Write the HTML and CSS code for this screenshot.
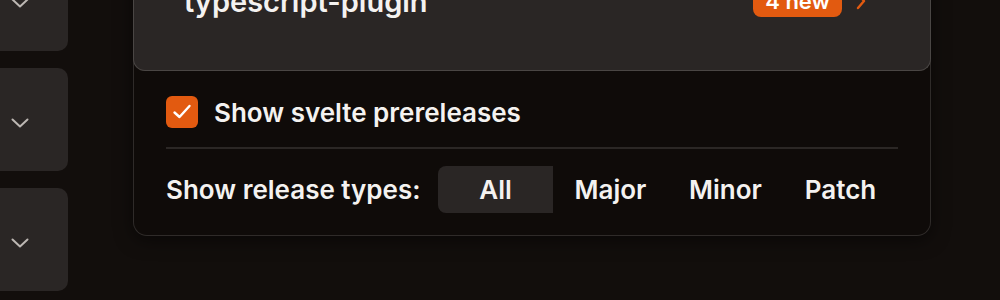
FILE: index.html
```html
<!DOCTYPE html>
<html>
<head>
<meta charset="utf-8">
<link rel="stylesheet" href="styles.css">
</head>
<body>
<div class="page">
  <div class="side">
    <div class="side-card"><svg class="chev" viewBox="0 0 18 10" width="18" height="10"><path d="M1.5 1.5l7.5 7 7.5-7" fill="none" stroke="#bcb7b3" stroke-width="2" stroke-linecap="round" stroke-linejoin="round"/></svg></div>
    <div class="side-card"><svg class="chev" viewBox="0 0 18 10" width="18" height="10"><path d="M1.5 1.5l7.5 7 7.5-7" fill="none" stroke="#bcb7b3" stroke-width="2" stroke-linecap="round" stroke-linejoin="round"/></svg></div>
    <div class="side-card"><svg class="chev" viewBox="0 0 18 10" width="18" height="10"><path d="M1.5 1.5l7.5 7 7.5-7" fill="none" stroke="#bcb7b3" stroke-width="2" stroke-linecap="round" stroke-linejoin="round"/></svg></div>
  </div>
  <div class="panel">
    <div class="pkg">
      <div class="pkg-row">
        <span class="pkg-name">typescript-plugin</span>
        <span class="badge">4 new</span>
        <svg class="arrow" viewBox="0 0 10 18" width="10" height="18"><path d="M2 2l6 7-6 7" fill="none" stroke="#e25a10" stroke-width="2.4" stroke-linecap="round" stroke-linejoin="round"/></svg>
      </div>
    </div>
    <div class="body">
      <label class="check-row">
        <span class="checkbox"><svg viewBox="0 0 22 22" width="22" height="22"><path d="M3.5 11.5l5 4.5 10-11" fill="none" stroke="#fff" stroke-width="2.4" stroke-linecap="round" stroke-linejoin="round"/></svg></span>
        <span class="check-label">Show svelte prereleases</span>
      </label>
      <div class="divider"></div>
      <div class="types-row">
        <span class="types-label">Show release types:</span>
        <div class="segments">
          <span class="seg active">All</span>
          <span class="seg">Major</span>
          <span class="seg">Minor</span>
          <span class="seg">Patch</span>
        </div>
      </div>
    </div>
  </div>
</div>
</body>
</html>
```

FILE: styles.css
```css
html, body {
  margin: 0;
  padding: 0;
  background: #120e0c;
  overflow: hidden;
  width: 1000px;
  height: 300px;
}
body {
  font-family: Inter, "Noto Sans", sans-serif;
  color: #f4f2f0;
}
.page {
  display: flex;
  align-items: flex-start;
}
.side {
  display: flex;
  flex-direction: column;
  gap: 17px;
  width: 68px;
  margin-top: -52px;
}
.side-card {
  height: 103px;
  background: #2a2625;
  border-radius: 0 10px 10px 0;
  display: flex;
  align-items: center;
  padding: 6px 0 0 11px;
  box-sizing: border-box;
}
.chev { display: block; }
.panel {
  margin-left: 65px;
  margin-top: -29px;
  width: 798px;
  box-sizing: border-box;
  background: #0f0b09;
  border: 1px solid #2f2b29;
  border-top: none;
  border-radius: 0 0 14px 14px;
  box-shadow: 0 4px 18px rgba(0,0,0,0.5);
}
.pkg {
  margin: 0 -1px;
  height: 100px;
  box-sizing: border-box;
  background: #2a2625;
  border: 1px solid #4a4644;
  border-top: none;
  border-radius: 0 0 12px 12px;
  padding: 15px 64px 0 50px;
}
.pkg-row {
  display: flex;
  align-items: center;
  height: 30px;
}
.pkg-name {
  font-size: 29px;
  font-weight: 600;
  flex: 1;
}
.badge {
  background: #e25a10;
  color: #fff;
  font-size: 22px;
  font-weight: 600;
  border-radius: 8px;
  height: 31px;
  line-height: 31px;
  padding: 0 12px;
  margin-right: 14px;
}
.arrow { display: block; }
.body {
  padding: 25px 32px 22px 32px;
}
.check-row {
  display: flex;
  align-items: center;
  gap: 16px;
}
.checkbox {
  width: 32px;
  height: 32px;
  border-radius: 6px;
  background: #e25a10;
  display: flex;
  align-items: center;
  justify-content: center;
}
.checkbox svg { display: block; }
.check-label {
  font-size: 26px;
  font-weight: 600;
}
.divider {
  height: 2px;
  background: #2b2725;
  margin: 19px 0 17px;
}
.types-row {
  display: flex;
  align-items: center;
}
.types-label {
  font-size: 26px;
  font-weight: 600;
  flex: 1;
}
.segments {
  display: flex;
  border-radius: 8px;
  overflow: hidden;
}
.seg {
  width: 115px;
  height: 47px;
  display: flex;
  align-items: center;
  justify-content: center;
  font-size: 26px;
  font-weight: 600;
}
.seg.active {
  background: #2a2625;
}
```
